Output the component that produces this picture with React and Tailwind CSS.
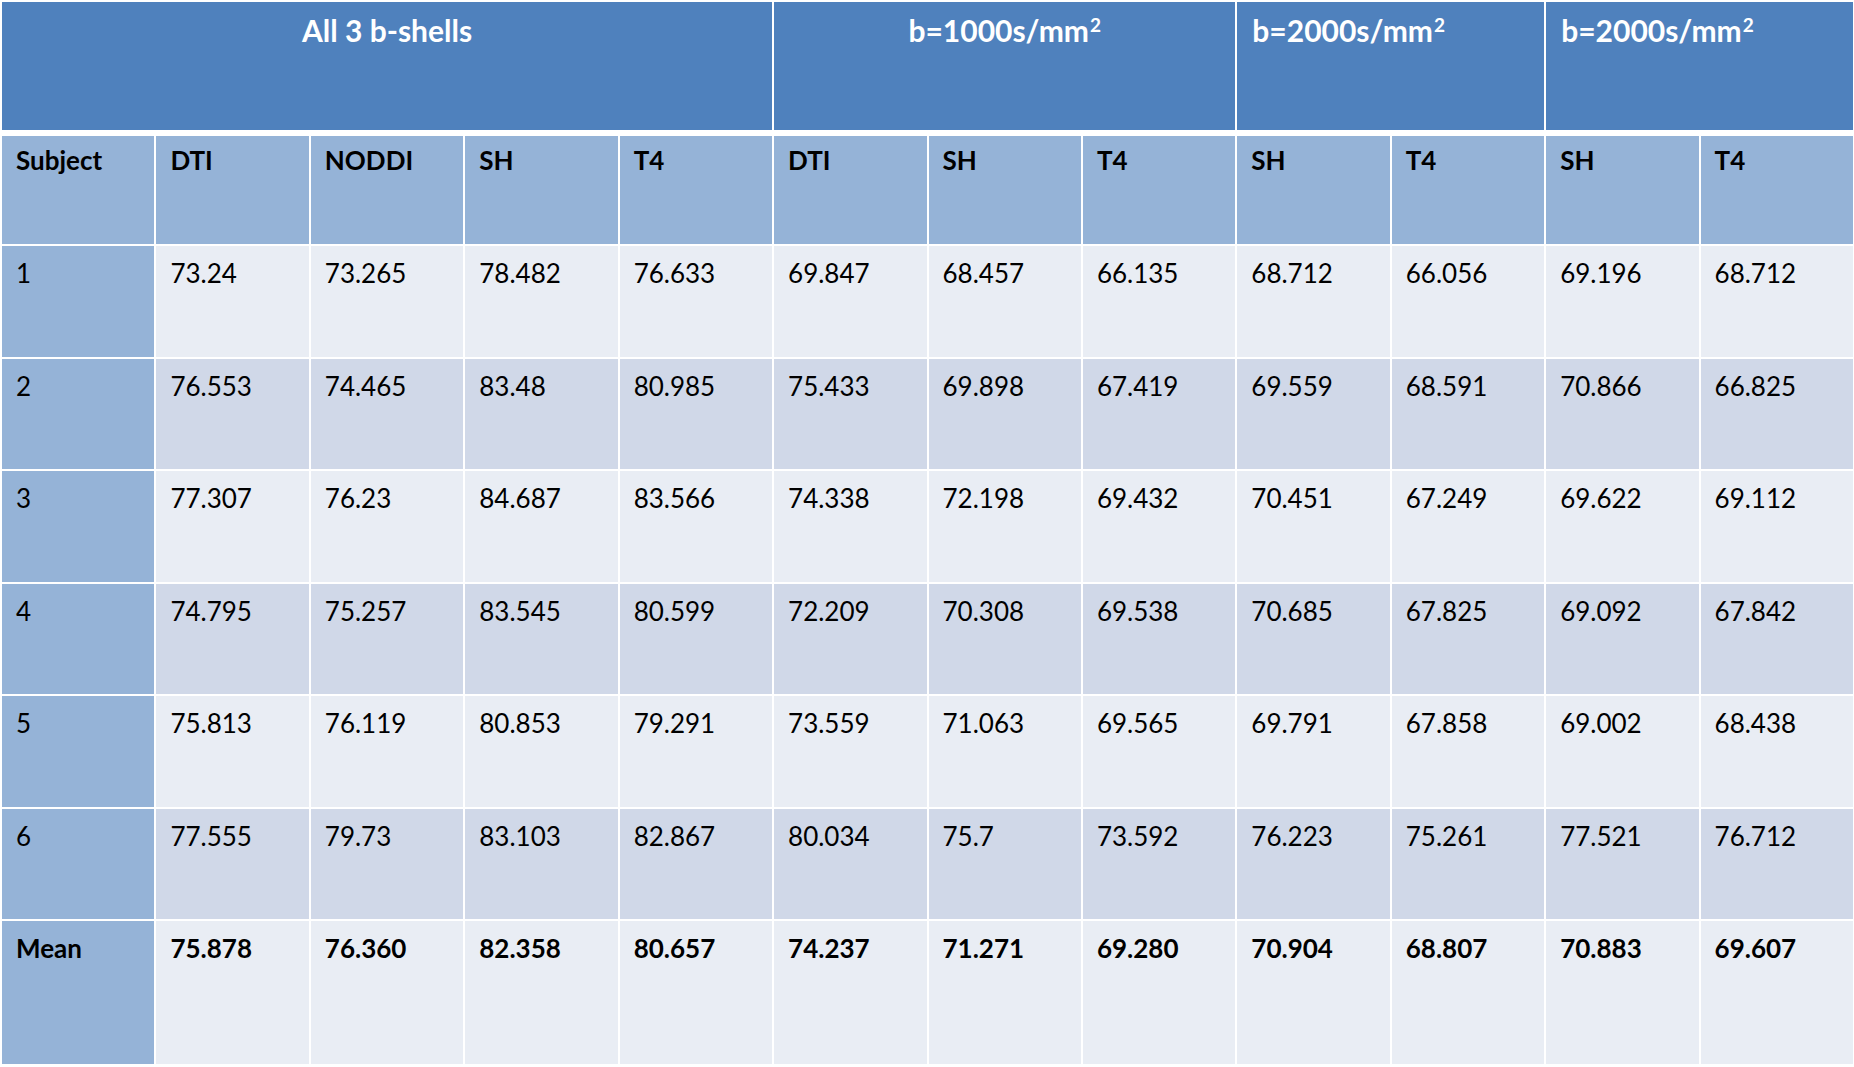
import React from 'react'

const Sq = () => <span className="relative -top-[10px] ml-[1px] text-[19px]">2</span>

const groups = [
    { label: 'All 3 b-shells', sup: false, span: 'col-span-5', align: 'justify-center' },
    { label: 'b=1000s/mm', sup: true, span: 'col-span-3', align: 'justify-center' },
    { label: 'b=2000s/mm', sup: true, span: 'col-span-2', align: 'justify-start pl-[15px]' },
    { label: 'b=2000s/mm', sup: true, span: 'col-span-2', align: 'justify-start pl-[15px]' },
]

const heads = ['Subject', 'DTI', 'NODDI', 'SH', 'T4', 'DTI', 'SH', 'T4', 'SH', 'T4', 'SH', 'T4']

const rows = [
    ['1', '73.24', '73.265', '78.482', '76.633', '69.847', '68.457', '66.135', '68.712', '66.056', '69.196', '68.712'],
    ['2', '76.553', '74.465', '83.48', '80.985', '75.433', '69.898', '67.419', '69.559', '68.591', '70.866', '66.825'],
    ['3', '77.307', '76.23', '84.687', '83.566', '74.338', '72.198', '69.432', '70.451', '67.249', '69.622', '69.112'],
    ['4', '74.795', '75.257', '83.545', '80.599', '72.209', '70.308', '69.538', '70.685', '67.825', '69.092', '67.842'],
    ['5', '75.813', '76.119', '80.853', '79.291', '73.559', '71.063', '69.565', '69.791', '67.858', '69.002', '68.438'],
    ['6', '77.555', '79.73', '83.103', '82.867', '80.034', '75.7', '73.592', '76.223', '75.261', '77.521', '76.712'],
]

const mean = ['Mean', '75.878', '76.360', '82.358', '80.657', '74.237', '71.271', '69.280', '70.904', '68.807', '70.883', '69.607']

export default function App() {
    return (
        <div className="min-h-screen bg-white pt-[2px] pl-[2px] font-['Lato',sans-serif] text-[26px] leading-[31px] text-black">
            <div className="grid w-[1851px] grid-cols-12 gap-x-[2px] gap-y-[2px] grid-rows-[132px_108px_repeat(6,110.5px)_143px]">
                {groups.map((g, i) => (
                    <div
                        key={'g' + i}
                        className={`${g.span} mb-[4px] flex items-start ${g.align} bg-[#4f81bd] pt-[10px] text-[30px] leading-[36px] font-bold text-white`}
                    >
                        <span>
                            {g.label}
                            {g.sup && <Sq />}
                        </span>
                    </div>
                ))}

                {heads.map((h, i) => (
                    <div key={'h' + i} className="bg-[#95b3d7] pl-[14px] pt-[9px] font-bold">
                        {h}
                    </div>
                ))}

                {rows.map((r, ri) =>
                    r.map((v, ci) => (
                        <div
                            key={ri + '-' + ci}
                            className={`pl-[14px] pt-[12px] ${
                                ci === 0 ? 'bg-[#95b3d7]' : ri % 2 === 0 ? 'bg-[#e9edf4]' : 'bg-[#d0d8e8]'
                            }`}
                        >
                            {v}
                        </div>
                    ))
                )}

                {mean.map((v, ci) => (
                    <div
                        key={'m' + ci}
                        className={`pl-[14px] pt-[12px] font-bold ${ci === 0 ? 'bg-[#95b3d7]' : 'bg-[#e9edf4]'}`}
                    >
                        {v}
                    </div>
                ))}
            </div>
        </div>
    )
}
